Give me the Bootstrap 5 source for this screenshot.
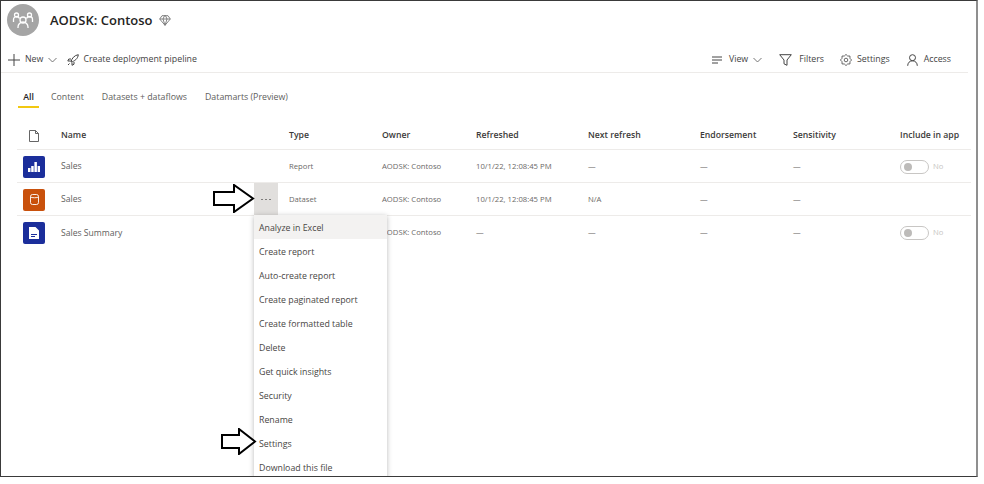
<!DOCTYPE html>
<html lang="en">
<head>
<meta charset="utf-8">
<title>AODSK: Contoso</title>
<link href="https://cdn.jsdelivr.net/npm/bootstrap@5.3.0/dist/css/bootstrap.min.css" rel="stylesheet">
<style>
html,body{background:#fff;height:484px;overflow:hidden}
body{font-family:"Open Sans","Noto Sans",sans-serif;font-size:8.8px;color:#484644}
.shot{width:978px;height:477px;border:solid #3a3a3a;border-width:1px 2px 1px 1px;border-right-color:#8f8f8f;position:relative;overflow:hidden;background:#fff}
.wshead{height:41px;padding:3px 0 0 6px;gap:11px}
.wsavatar{width:32px;height:32px;border-radius:50%;background:#a5a5a5}
.wstitle{font-size:13px;font-weight:600;color:#252423;line-height:32px}
.cmdbar{height:31px;margin-right:8px;padding:5px 0 0 7px;border-bottom:1px solid #edebe9;color:#444}
.cmd{gap:5px;white-space:nowrap}
.tabsbar{height:49px;padding:17px 0 0 17px;gap:18px;color:#605e5c}
.tabitem{height:18px;line-height:15px;white-space:nowrap}
.tabitem.on{color:#252423;font-weight:600;border-bottom:2px solid #f2c811;width:21px;text-align:center;margin-right:-6px}
.listing{margin:0 5px 0 16px}
.lrow{display:grid;grid-template-columns:44px 193px 35px 93px 94px 112px 112px 93px 107px 1fr;align-items:center;height:33px;padding-top:1px;border-bottom:1px solid #edebe9;color:#6b6967;font-size:7.7px;white-space:nowrap}
.lrow.head{height:28px;padding-top:0;color:#3b3a39;font-weight:600;font-size:8.7px}
.lrow.last{border-bottom:0}
.rname{font-size:8.6px;color:#605e5c}
.tile{width:22px;height:22px;border-radius:2px;margin-left:6px}
.t-blue{background:#1b2e9b}.t-orange{background:#c9510c}
.dots{height:32px;width:24px;background:#e1dfdd;gap:2px;align-self:start;margin-top:-1px}
.dots i{display:block;width:2px;height:1px;background:#7f7d7b}
.sw{width:29px;height:14px;border:1px solid #c8c6c4;border-radius:7px;padding-left:3px;margin-right:4px}
.sw i{display:block;width:8px;height:8px;border-radius:50%;background:#bdbbb9}
.muted{color:#c8c6c4}
.ctxmenu{position:absolute;left:253px;top:214px;width:133px;background:#fff;box-shadow:0 1px 5px rgba(0,0,0,.28);z-index:3;color:#484644;font-size:8.8px}
.ctxmenu div{height:24px;line-height:26px;padding-left:5px;white-space:nowrap}
.ctxmenu div.on{background:#f3f2f1}
.arrow{position:absolute;z-index:4}
</style>
</head>
<body>
<div class="shot">
  <div class="d-flex align-items-start wshead">
    <div class="wsavatar d-flex align-items-center justify-content-center">
      <svg width="22" height="20" viewBox="0 0 22 20" fill="none" stroke="#fff" stroke-width="1.3"><circle cx="11" cy="10" r="3"/><circle cx="4.5" cy="5" r="2"/><circle cx="17.5" cy="5" r="2"/><path d="M1.5 12v-2.500a3 3 0 0 1 3-3 3 3 0 0 1 3 2M20.500 12v-2.500a3 3 0 0 0-3-3 3 3 0 0 0-3 2M6 18v-1a5 5 0 0 1 10 0v1"/></svg>
    </div>
    <div class="d-flex align-items-center" style="gap:6px">
      <span class="wstitle">AODSK: Contoso</span>
      <svg width="12" height="11" viewBox="0 0 12 11" fill="none" stroke="#777" stroke-width=".9"><path d="M3 .7h6L11.300 4 6 10.300.7 4zM.7 4h10.600M4 4l2 6.300L8 4 6.500.7h-1z"/></svg>
    </div>
  </div>
  <div class="d-flex align-items-center justify-content-between cmdbar">
    <div class="d-flex align-items-center" style="gap:10px">
      <div class="d-flex align-items-center cmd">
        <svg width="12" height="12" viewBox="0 0 12 12" stroke="#444" stroke-width="1"><path d="M6 0v12M0 6h12"/></svg>
        <span>New</span>
        <svg width="9" height="6" viewBox="0 0 9 6" fill="none" stroke="#666" stroke-width=".9"><path d="M.5 1l4 4 4-4"/></svg>
      </div>
      <div class="d-flex align-items-center cmd" style="gap:4px">
        <svg width="12" height="12" viewBox="0 0 12 12" fill="none" stroke="#444" stroke-width="1"><path d="M4 8C4.500 4.500 7.500 1.200 11.300.7 11 4.500 7.500 7.500 4 8zM4 5H1.800L.8 7h3M7 8v2.200L5 11.300V8.500M2.500 9.500L1 11"/></svg>
        <span>Create deployment pipeline</span>
      </div>
    </div>
    <div class="d-flex align-items-center" style="margin-right:17px">
      <div class="d-flex align-items-center cmd" style="margin-right:17px">
        <svg width="10" height="8" viewBox="0 0 10 8" stroke="#444" stroke-width="1"><path d="M0 1h10M0 4h10M0 7h6"/></svg>
        <span style="margin-left:2px">View</span>
        <svg width="9" height="6" viewBox="0 0 9 6" fill="none" stroke="#666" stroke-width=".9"><path d="M.5 1l4 4 4-4"/></svg>
      </div>
      <div class="d-flex align-items-center cmd" style="margin-right:16px;gap:7px">
        <svg width="13" height="12" viewBox="0 0 13 12" fill="none" stroke="#444" stroke-width="1"><path d="M.7.700h11.600L8 6v5.300L5 9.800V6z"/></svg>
        <span>Filters</span>
      </div>
      <div class="d-flex align-items-center cmd" style="margin-right:17px">
        <svg width="12" height="12" viewBox="0 0 12 12" fill="none" stroke="#444" stroke-width=".8"><circle cx="6" cy="6" r="1.800"/><polygon points="11.600,6 9.970,7.650 9.960,9.960 7.650,9.970 6,11.600 4.350,9.970 2.040,9.960 2.030,7.650 .4,6 2.030,4.350 2.040,2.040 4.350,2.030 6,.4 7.650,2.030 9.960,2.040 9.970,4.350"/></svg>
        <span>Settings</span>
      </div>
      <div class="d-flex align-items-center cmd">
        <svg width="11" height="12" viewBox="0 0 11 12" fill="none" stroke="#444" stroke-width="1"><circle cx="5.500" cy="3.700" r="3"/><path d="M.7 11.800c0-3 2-5 4.800-5s4.800 2 4.800 5"/></svg>
        <span style="margin-left:1px">Access</span>
      </div>
    </div>
  </div>
  <div class="d-flex tabsbar">
    <div class="tabitem on">All</div>
    <div class="tabitem">Content</div>
    <div class="tabitem">Datasets + dataflows</div>
    <div class="tabitem">Datamarts (Preview)</div>
  </div>
  <div class="listing">
    <div class="lrow head">
      <svg style="margin-left:12px" width="10" height="12" viewBox="0 0 10 12" fill="none" stroke="#555" stroke-width=".9"><path d="M.5.500h6l3 3v8h-9zM6.500.500v3h3"/></svg>
      <span>Name</span><span></span><span>Type</span><span>Owner</span><span>Refreshed</span><span>Next refresh</span><span>Endorsement</span><span>Sensitivity</span><span>Include in app</span>
    </div>
    <div class="lrow">
      <div class="tile t-blue d-flex align-items-center justify-content-center"><svg width="12" height="10" viewBox="0 0 12 10" fill="#fff"><path d="M0 6h2.500v4H0zM3.200 4h2.500v6H3.200zM6.400 0h2.500v10H6.400zM9.600 4H12v6H9.600z"/></svg></div>
      <span class="rname">Sales</span><span></span><span>Report</span><span>AODSK: Contoso</span><span>10/1/22, 12:08:45 PM</span><span>—</span><span>—</span><span>—</span>
      <div class="d-flex align-items-center"><div class="sw d-flex align-items-center"><i></i></div><span class="muted">No</span></div>
    </div>
    <div class="lrow">
      <div class="tile t-orange d-flex align-items-center justify-content-center"><svg width="9" height="11" viewBox="0 0 9 11" fill="none" stroke="#fff" stroke-width=".9"><rect x=".5" y=".5" width="8" height="10" rx="2"/><path d="M.5 3c1 1 7 1 8 0"/></svg></div>
      <span class="rname">Sales</span>
      <div class="dots d-flex align-items-center justify-content-center"><i></i><i></i><i></i></div>
      <span>Dataset</span><span>AODSK: Contoso</span><span>10/1/22, 12:08:45 PM</span><span>N/A</span><span>—</span><span>—</span><span></span>
    </div>
    <div class="lrow last">
      <div class="tile t-blue d-flex align-items-center justify-content-center"><svg width="10" height="12" viewBox="0 0 10 12" fill="#fff"><path d="M0 0h6.500L10 3.500V12H0zM2 7v1h6V7zm0 2v1h4V9z" fill-rule="evenodd"/></svg></div>
      <span class="rname">Sales Summary</span><span></span><span></span><span>AODSK: Contoso</span><span>—</span><span>—</span><span>—</span><span>—</span>
      <div class="d-flex align-items-center"><div class="sw d-flex align-items-center"><i></i></div><span class="muted">No</span></div>
    </div>
  </div>
  <div class="ctxmenu">
    <div class="on">Analyze in Excel</div>
    <div>Create report</div>
    <div>Auto-create report</div>
    <div>Create paginated report</div>
    <div>Create formatted table</div>
    <div>Delete</div>
    <div>Get quick insights</div>
    <div>Security</div>
    <div>Rename</div>
    <div>Settings</div>
    <div>Download this file</div>
  </div>
  <svg class="arrow" style="left:212px;top:183px" width="42" height="29" viewBox="0 0 42 29" fill="#fff" stroke="#000" stroke-width="2"><path d="M1 8h20V1l19 13.500L21 28v-7H1z"/></svg>
  <svg class="arrow" style="left:220px;top:427px" width="36" height="27" viewBox="0 0 36 27" fill="#fff" stroke="#000" stroke-width="2"><path d="M1 7h17V1l16 12.500L18 26v-6H1z"/></svg>
</div>
</body>
</html>
